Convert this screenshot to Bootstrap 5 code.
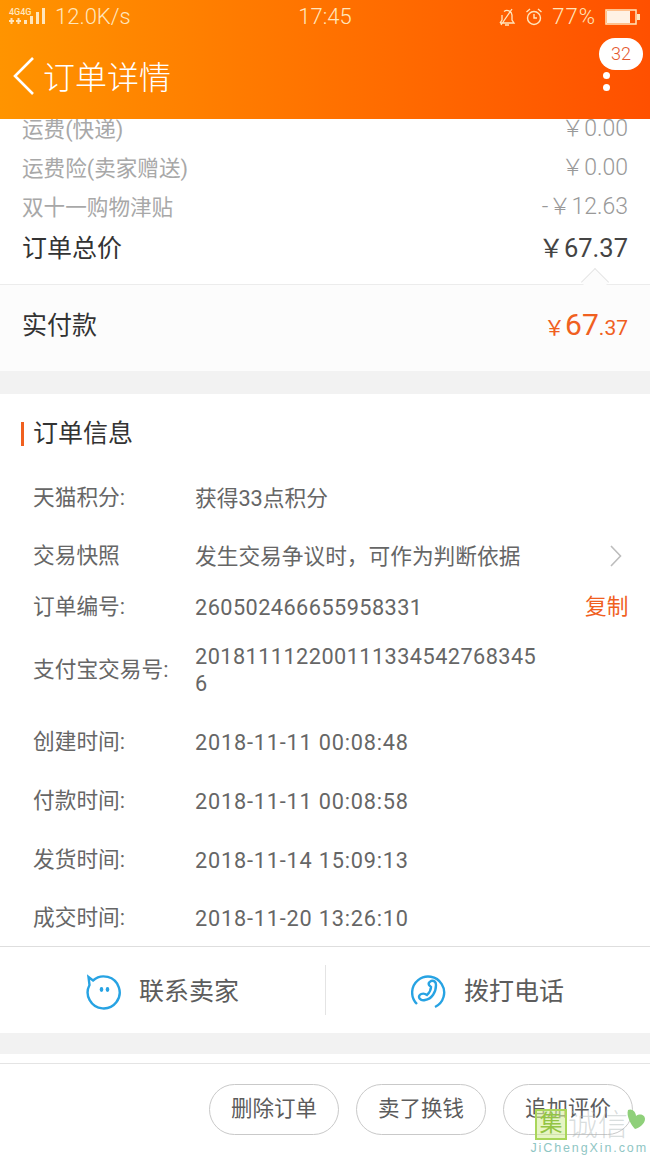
<!DOCTYPE html>
<html lang="zh">
<head>
  <meta charset="UTF-8">
  <title>订单详情</title>
  <link href="https://cdn.jsdelivr.net/npm/bootstrap@5.3.0/dist/css/bootstrap.min.css" rel="stylesheet">
  <style>
    html, body { height: 100%; }
    body {
      width: 650px;
      height: 1155px;
      overflow: hidden;
      background: #fff;
      font-family: Roboto, "Noto Sans CJK SC", sans-serif;
      color: #333;
    }
    .top-head {
      height: 119px;
      background: linear-gradient(to right, #ff9400, #ff5000);
      color: #fff;
      z-index: 5;
    }
    .status-line {
      height: 33px;
      padding: 0 9px;
      font-size: 22px;
      font-weight: 300;
      color: #ffe6bd;
      line-height: 33px;
    }
    .status-side { width: 240px; }
    .status-icons { gap: 9px; }
    .batt-text { letter-spacing: 1px; }
    .sim-mark { width: 38px; height: 22px; }
    .sim-mark em { left: 0; top: 2px; font-size: 9px; line-height: 1; font-style: normal; font-weight: 500; letter-spacing: 0; }
    .title-line { padding-left: 12px; height: 86px; }
    .page-name { font-size: 32px; line-height: 1; margin-left: 8px; margin-top: 4px; font-weight: 300; }
    .msg-count {
      top: 38px; right: 7px;
      width: 44px; height: 32px;
      background: #fff; color: #e4572e;
      border-radius: 16px;
      font-size: 18px; font-weight: 300;
      line-height: 32px; text-align: center;
    }
    .more-dots { top: 72px; right: 40px; width: 7px; }
    .more-dots i { display: block; width: 7px; height: 7px; border-radius: 50%; background: #fff; margin-bottom: 5px; }

    .fee-wrap { margin-top: -9px; padding: 0 22px; }
    .fee-line { height: 39px; font-size: 21.6px; color: #a8a8a8; }
    .fee-label { padding-top: 2px; }
    .fee-line .fee-num { font-size: 23px; font-weight: 300; color: #999; }
    .fee-total { height: 43px; font-size: 25px; color: #333; font-weight: 400; }
    .fee-total .fee-num { font-size: 25.5px; color: #444; }
    .paid-box {
      margin-top: 14px;
      height: 87px;
      padding: 0 22px 4px;
      background: #fcfcfc;
      border-top: 1px solid #ececec;
      font-size: 25px;
    }
    .paid-arrow {
      top: -14px; right: 44px;
      width: 22px; height: 22px;
      background: #fcfcfc;
      border-top: 1px solid #e4e4e4;
      border-left: 1px solid #e4e4e4;
      transform: rotate(45deg) scale(.9);
    }
    .paid-num { color: #f0601f; font-size: 21px; font-weight: 400; margin-bottom: 3px; }
    .paid-num b { font-size: 30px; font-weight: 400; }
    .gap-band { height: 23px; background: #f2f2f2; }
    .info-title { padding: 27px 0 0 21px; height: 74px; font-size: 25px; line-height: 1.0; color: #333; }
    .info-title span { border-left: 3px solid #f0601f; padding-left: 9px; display: inline-block; height: 24px; line-height: 24px; }
    .info-row { display: flex; align-items: center; padding-left: 33px; font-size: 21.7px; color: #666; font-weight: 400; }
    .info-key { width: 162px; flex: none; }
    .info-val { width: 345px; word-break: break-all; line-height: 27px; }
    .num-val { letter-spacing: .45px; }
    .date-val { letter-spacing: .8px; }
    .copy-link { color: #f0601f; margin-left: 45px; }
    .row-arrow { margin-right: 28px; }
    .pay-row { padding-bottom: 4px; }
    .last-row { padding-top: 1px; }
    .contact-bar { height: 87px; border-top: 1px solid #dedede; }
    .contact-item { width: 50%; font-size: 25px; color: #5c5c5c; gap: 17px; padding-top: 4px; }
    .contact-item + .contact-item { position: relative; }
    .contact-item + .contact-item::before {
      content: ""; position: absolute; left: 0; top: 18px; bottom: 18px; width: 1px; background: #e4e4e4;
    }
    .band-small { height: 21px; background: #f2f2f2; }
    .foot-bar { margin-top: 9px; border-top: 1px solid #e4e4e4; padding: 20px 17px 0 0; gap: 17px; }
    .order-btn {
      width: 130px; height: 51px;
      border: 1px solid #c9c9c9;
      border-radius: 26px;
      background: #fff;
      font-size: 21.5px; color: #5c5c5c;
      padding: 0;
    }
    .water-mark { right: 0; bottom: 0; width: 120px; height: 50px; }
    .water-box {
      left: 5px; top: 4px;
      width: 32px; height: 31px;
      background: rgba(214,239,156,.6);
      border: 2px solid #a9d65a;
      color: #93c443;
      font-size: 23px; line-height: 26px; text-align: center;
    }
    .water-url { right: 2px; bottom: 1px; font-size: 12.5px; letter-spacing: 1.9px; color: #8fc6c4; line-height: 1; font-family: "Liberation Sans", sans-serif; }
    .water-char { left: 38px; top: 5px; font-size: 30px; color: rgba(170,180,180,.45); font-weight: 300; line-height: 1; }
  </style>
</head>
<body class="position-relative">
  <div class="top-head position-relative">
    <div class="status-line d-flex justify-content-between">
      <div class="status-side d-flex align-items-center gap-2">
        <div class="sim-mark position-relative">
          <em class="position-absolute">4G4G</em>
          <svg class="position-absolute" style="left:0;top:0" width="38" height="22" viewBox="0 0 38 22" fill="#ffe6bd">
            <path d="M0 14h5v2H0zM7 14h5v2H7zM1.500 12h2v6h-2zM8.500 12h2v6h-2z"/>
            <rect x="15" y="14" width="3" height="4"/><rect x="21" y="10" width="3" height="8"/>
            <rect x="27" y="6" width="3" height="12"/><rect x="33" y="2" width="3" height="16"/>
          </svg>
        </div>
        <span>12.0K/s</span>
      </div>
      <div>17:45</div>
      <div class="status-side status-icons d-flex align-items-center justify-content-end">
        <svg width="18" height="20" viewBox="0 0 18 20" fill="none" stroke="#ffe6bd" stroke-width="1.300">
          <path d="M2 16h14l-2-3V8a5 5 0 0 0-8-3.500M4 8v5l-2 3M7 18h4M14 2 3 18"/>
        </svg>
        <svg width="18" height="20" viewBox="0 0 18 20" fill="none" stroke="#ffe6bd" stroke-width="1.400">
          <circle cx="9" cy="11" r="6.500"/><path d="M9 7v4h3M1.500 5 5 2M16.500 5 13 2"/>
        </svg>
        <span class="batt-text">77%</span>
        <svg width="36" height="18" viewBox="0 0 36 18">
          <rect x="1" y="2" width="30" height="14" fill="none" stroke="#ffe6bd" stroke-width="1.500"/>
          <rect x="2" y="3" width="23" height="12" fill="#fff2e4"/>
          <rect x="32" y="6" width="3" height="6" fill="#ffe6bd"/>
        </svg>
      </div>
    </div>
    <div class="title-line d-flex align-items-center">
      <svg width="23" height="40" viewBox="0 0 23 40" fill="none" stroke="#fff" stroke-width="2.600">
        <path d="M21 2 3 20l18 18"/>
      </svg>
      <div class="page-name">订单详情</div>
    </div>
    <div class="msg-count position-absolute">32</div>
    <div class="more-dots position-absolute"><i></i><i></i></div>
  </div>

  <div class="fee-wrap">
    <div class="fee-line d-flex justify-content-between align-items-center"><span class="fee-label">运费(快递)</span><span class="fee-num">￥0.00</span></div>
    <div class="fee-line d-flex justify-content-between align-items-center"><span class="fee-label">运费险(卖家赠送)</span><span class="fee-num">￥0.00</span></div>
    <div class="fee-line d-flex justify-content-between align-items-center"><span class="fee-label">双十一购物津贴</span><span class="fee-num">-￥12.63</span></div>
    <div class="fee-total d-flex justify-content-between align-items-center"><span>订单总价</span><span class="fee-num">￥67.37</span></div>
  </div>
  <div class="paid-box position-relative d-flex justify-content-between align-items-center">
    <div class="paid-arrow position-absolute"></div>
    <span>实付款</span>
    <span class="paid-num">￥<b>67</b>.37</span>
  </div>
  <div class="gap-band"></div>

  <div class="info-title"><span>订单信息</span></div>
  <div class="info-row" style="height:61px"><div class="info-key">天猫积分:</div><div class="info-val">获得33点积分</div></div>
  <div class="info-row" style="height:54px"><div class="info-key">交易快照</div><div class="info-val">发生交易争议时，可作为判断依据</div>
    <svg class="ms-auto row-arrow" width="13" height="22" viewBox="0 0 13 22" fill="none" stroke="#bdbdbd" stroke-width="1.600"><path d="m2 1 9.500 10L2 21"/></svg>
  </div>
  <div class="info-row" style="height:48px"><div class="info-key">订单编号:</div><div class="info-val num-val">260502466655958331</div><span class="copy-link">复制</span></div>
  <div class="info-row pay-row" style="height:82px"><div class="info-key">支付宝交易号:</div><div class="info-val num-val">2018111122001113345427683456</div></div>
  <div class="info-row" style="height:59px"><div class="info-key">创建时间:</div><div class="info-val date-val">2018-11-11 00:08:48</div></div>
  <div class="info-row" style="height:59px"><div class="info-key">付款时间:</div><div class="info-val date-val">2018-11-11 00:08:58</div></div>
  <div class="info-row" style="height:58px"><div class="info-key">发货时间:</div><div class="info-val date-val">2018-11-14 15:09:13</div></div>
  <div class="info-row last-row" style="height:57px"><div class="info-key">成交时间:</div><div class="info-val date-val">2018-11-20 13:26:10</div></div>

  <div class="contact-bar d-flex">
    <div class="contact-item d-flex align-items-center justify-content-center">
      <svg width="36" height="36" viewBox="0 0 36 36" fill="none" stroke="#27a3e3" stroke-width="2.400">
        <path d="M7 6.500A16 16 0 1 1 3.500 11L2.500 3z"/>
        <ellipse cx="15.500" cy="15.500" rx="1.800" ry="2.400" fill="#27a3e3" stroke="none"/><ellipse cx="21.500" cy="15.500" rx="1.800" ry="2.400" fill="#27a3e3" stroke="none"/>
      </svg>
      <span>联系卖家</span>
    </div>
    <div class="contact-item d-flex align-items-center justify-content-center">
      <svg width="36" height="36" viewBox="0 0 36 36" fill="none" stroke="#27a3e3" stroke-width="2.400">
        <path d="M6 30A16 16 0 1 1 24 33"/>
        <path d="M20 7c3-1 5 1 5 4 0 7-4 14-11 15-3 1-6-1-6-3 0-3 4-4 6-3l2 1c3-3 4-6 4-8l-2-2c-1-2 0-3 2-4z"/>
      </svg>
      <span>拨打电话</span>
    </div>
  </div>
  <div class="band-small"></div>
  <div class="foot-bar d-flex justify-content-end">
    <button type="button" class="btn order-btn">删除订单</button>
    <button type="button" class="btn order-btn">卖了换钱</button>
    <button type="button" class="btn order-btn">追加评价</button>
  </div>

  <div class="water-mark position-absolute">
    <div class="water-box position-absolute">集</div>
    <div class="water-char position-absolute">诚信</div>
    <svg class="position-absolute" style="right:4px;top:3px" width="20" height="22" viewBox="0 0 20 22"><path d="M2 2c4-2 8 2 8 6 4-3 9-1 9 3 0 5-6 9-10 10C5 17 0 8 2 2z" fill="#8fd07a"/></svg>
    <div class="water-url position-absolute">JiChengXin.com</div>
  </div>
</body>
</html>
